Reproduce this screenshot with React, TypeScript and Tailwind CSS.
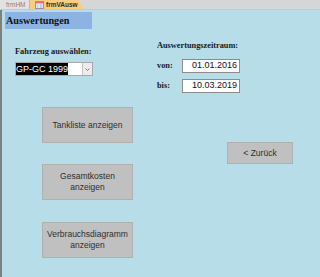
import React from "react";

const serif = { fontFamily: '"Liberation Serif", "Times New Roman", serif' };
const sans = { fontFamily: '"Liberation Sans", Arial, sans-serif' };

function FormIcon() {
  return (
    <svg width="9" height="8" viewBox="0 0 9 8">
      <rect x="0.5" y="0.5" width="8" height="7" fill="#ffffff" stroke="#9a8fa8" />
      <rect x="1" y="1" width="7" height="1.5" fill="#e46a8a" />
      <rect x="1.5" y="3.5" width="2" height="1" fill="#8a9ad0" />
      <rect x="4.5" y="3.5" width="3" height="1" fill="#8a9ad0" />
      <rect x="1.5" y="5.5" width="2" height="1" fill="#8a9ad0" />
      <rect x="4.5" y="5.5" width="3" height="1" fill="#8a9ad0" />
    </svg>
  );
}

function Btn({ children, className }: { children: React.ReactNode; className: string }) {
  return (
    <div
      className={`flex items-center justify-center text-center bg-[#c0c0c0] border border-[#b0b0b0] text-[8.5px] leading-[11px] text-[#2e2e2e] ${className}`}
      style={sans}
    >
      {children}
    </div>
  );
}

export default function App() {
  return (
    <div className="w-[320px] h-[277px] flex flex-col bg-[#b7dde8] overflow-hidden">
      {/* tab bar */}
      <div className="h-[10px] flex items-stretch bg-[#d6d6d6] border-b border-[#c8c8c8]">
        <div
          className="w-[29px] flex items-center pl-[6px] bg-[#e2e2e2] text-[6.5px] text-[#9a7a84]"
          style={sans}
        >
          frmHM
        </div>
        <div className="w-[1px] bg-[#b8b8b8]" />
        <div
          className="w-[54px] flex items-center gap-[2px] pl-[5px] bg-[#f8cd82] text-[6.5px] font-bold text-[#3a2a10] whitespace-nowrap [clip-path:polygon(0_0,48px_0,54px_100%,0_100%)]"
          style={sans}
        >
          <FormIcon />
          <span>frmVAusw</span>
        </div>
      </div>

      {/* body */}
      <div className="flex-1 flex flex-col border-l-2 border-[#7f7f7f]">
        <div
          className="ml-[3px] mt-[2px] w-[87px] h-[17px] bg-[#8db3e2] flex items-center pl-[1px] text-[10.2px] font-bold text-[#111111]"
          style={serif}
        >
          Auswertungen
        </div>

        {/* top section */}
        <div className="h-[78px] flex">
          <div className="ml-[13px] w-[78px] flex flex-col">
            <div className="mt-[18px] h-[10px] leading-[10px] text-[8.4px] font-bold text-[#1a1a1a]" style={serif}>
              Fahrzeug auswählen:
            </div>
            <div className="mt-[5px] h-[14px] w-[78px] flex bg-white border border-[#a8a8a8]">
              <div className="flex-1 flex items-center">
                <span className="bg-black text-white text-[9px] leading-[12px]" style={sans}>
                  GP-GC 1999
                </span>
              </div>
              <div className="w-[10px] flex items-center justify-center bg-[#ececec] border-l border-[#c4c4c4]">
                <svg width="5" height="3" viewBox="0 0 5 3">
                  <path d="M0.5 0.5 L2.5 2.5 L4.5 0.5" fill="none" stroke="#666" strokeWidth="0.8" />
                </svg>
              </div>
            </div>
          </div>

          <div className="ml-[64px] flex flex-col">
            <div className="mt-[12px] h-[10px] leading-[10px] text-[8.3px] font-bold text-[#1a1a1a]" style={serif}>
              Auswertungszeitraum:
            </div>
            <div className="mt-[8px] flex items-center">
              <div className="w-[25px] text-[8.3px] font-bold text-[#1a1a1a]" style={serif}>
                von:
              </div>
              <div
                className="w-[58px] h-[14px] bg-white border border-[#8c8c8c] flex items-center justify-end pr-[2px] text-[9px] text-[#111]"
                style={sans}
              >
                01.01.2016
              </div>
            </div>
            <div className="mt-[6px] flex items-center">
              <div className="w-[25px] text-[8.3px] font-bold text-[#1a1a1a]" style={serif}>
                bis:
              </div>
              <div
                className="w-[58px] h-[14px] bg-white border border-[#8c8c8c] flex items-center justify-end pr-[2px] text-[9px] text-[#111]"
                style={sans}
              >
                10.03.2019
              </div>
            </div>
          </div>
        </div>

        {/* bottom section */}
        <div className="flex">
          <div className="ml-[40px] flex flex-col">
            <Btn className="w-[91px] h-[36px]">Tankliste anzeigen</Btn>
            <Btn className="w-[91px] h-[36px] mt-[21px]">
              Gesamtkosten
              <br />
              anzeigen
            </Btn>
            <Btn className="w-[91px] h-[36px] mt-[22px]">
              Verbrauchsdiagramm
              <br />
              anzeigen
            </Btn>
          </div>
          <div className="ml-[94px] mt-[35px]">
            <Btn className="w-[66px] h-[22px]">&lt; Zurück</Btn>
          </div>
        </div>
      </div>
    </div>
  );
}
